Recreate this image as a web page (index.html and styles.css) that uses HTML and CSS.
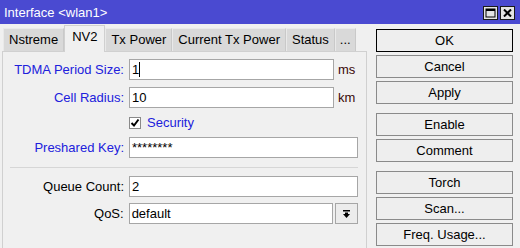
FILE: index.html
```html
<!DOCTYPE html>
<html lang="en">

<head>
    <meta charset="UTF-8">
    <meta name="viewport" content="width=device-width, initial-scale=1.0">
    <title>Interface &lt;wlan1&gt;</title>
    <link rel="stylesheet" href="styles.css">
</head>

<body>
    <div class="titlebar">
        <span class="title">Interface &lt;wlan1&gt;</span>
        <div class="win-buttons">
            <span class="win-btn">
                <svg width="11" height="10" viewBox="0 0 11 10">
                    <rect x="1" y="1" width="9" height="8" fill="none" stroke="#000" stroke-width="1"/>
                    <rect x="1" y="1" width="9" height="2" fill="#000"/>
                </svg>
            </span>
            <span class="win-btn">
                <svg width="9" height="8" viewBox="0 0 9 8">
                    <path d="M1 0.5 L8 7.5 M8 0.5 L1 7.5" stroke="#000" stroke-width="2"/>
                </svg>
            </span>
        </div>
    </div>

    <div class="main">
        <div class="left">
            <div class="tabs">
                <div class="tab">Nstreme</div>
                <div class="tab active">NV2</div>
                <div class="tab">Tx Power</div>
                <div class="tab">Current Tx Power</div>
                <div class="tab">Status</div>
                <div class="tab more">...</div>
            </div>

            <div class="panel">
                <div class="row first">
                    <span class="label blue">TDMA Period Size:</span>
                    <div class="field short">1<span class="caret"></span></div>
                    <span class="unit">ms</span>
                </div>
                <div class="row gap7">
                    <span class="label blue">Cell Radius:</span>
                    <div class="field short">10</div>
                    <span class="unit">km</span>
                </div>
                <div class="row check-row">
                    <span class="label"></span>
                    <span class="checkbox">
                        <svg width="10" height="10" viewBox="0 0 10 10">
                            <path d="M1.5 5 L4 7.5 L8.5 1.5" fill="none" stroke="#000" stroke-width="2"/>
                        </svg>
                    </span>
                    <span class="check-label blue">Security</span>
                </div>
                <div class="row gap4">
                    <span class="label blue">Preshared Key:</span>
                    <div class="field long">********</div>
                </div>

                <div class="separator"></div>

                <div class="row">
                    <span class="label">Queue Count:</span>
                    <div class="field long">2</div>
                </div>
                <div class="row gap6">
                    <span class="label">QoS:</span>
                    <div class="field short">default</div>
                    <span class="drop-btn">
                        <svg width="7" height="8" viewBox="0 0 7 8">
                            <rect x="0" y="0" width="7" height="1.5" fill="#000"/>
                            <rect x="2" y="2.5" width="3" height="1.5" fill="#000"/>
                            <path d="M0 4 L7 4 L3.5 8 Z" fill="#000"/>
                        </svg>
                    </span>
                </div>
            </div>
        </div>

        <div class="buttons">
            <div class="group">
                <div class="btn default">OK</div>
                <div class="btn">Cancel</div>
                <div class="btn">Apply</div>
            </div>
            <div class="group">
                <div class="btn">Enable</div>
                <div class="btn">Comment</div>
            </div>
            <div class="group">
                <div class="btn">Torch</div>
                <div class="btn">Scan...</div>
                <div class="btn">Freq. Usage...</div>
            </div>
        </div>
    </div>
</body>

</html>
```

FILE: styles.css
```css
/* Window frame */
body {
    margin: 0;
    background-color: #f0f0f0;
    font-family: 'Liberation Sans', Arial, sans-serif;
    font-size: 13px;
    color: #000;
    overflow: hidden;
}

.titlebar {
    height: 24px;
    background-color: #4a4ad1;
    display: flex;
    align-items: center;
    justify-content: space-between;
}

.title {
    color: #fff;
    padding-left: 4px;
    padding-top: 1px;
}

.win-buttons {
    display: flex;
    gap: 2px;
    margin-right: 5px;
    margin-top: 1px;
}

.win-btn {
    width: 13px;
    height: 12px;
    border: 1px solid #1a1a1a;
    background-color: #e4e4e4;
    display: flex;
    align-items: center;
    justify-content: center;
}

.main {
    display: flex;
}

/* Tabs and the property panel */
.left {
    margin-left: 2px;
    width: 365px;
}

.tabs {
    display: flex;
    align-items: flex-end;
    height: 26px;
    margin-top: 1px;
    padding-left: 1px;
}

.tab {
    height: 22px;
    line-height: 22px;
    padding: 0 5px;
    background-color: #d9d9d9;
    border: 1px solid #c9c9c9;
    border-top-color: #e9e9e9;
    border-left-color: #e9e9e9;
    border-bottom: none;
    box-sizing: content-box;
}

.tab.active {
    height: 26px;
    line-height: 22px;
    padding: 0 7px;
    background-color: #f0f0f0;
    border-color: #d0d0d0;
    margin-bottom: -1px;
    position: relative;
    z-index: 1;
}

.tab.more {
    padding: 0 4px;
}

.panel {
    border: 1px solid #d0d0d0;
    border-bottom: none;
    height: 200px;
    padding-top: 7px;
    padding-right: 8px;
}

.row {
    display: flex;
    align-items: center;
    height: 21px;
}

.gap7 {
    margin-top: 7px;
}

.gap6 {
    margin-top: 6px;
}

.gap4 {
    margin-top: 4px;
}

.check-row {
    margin-top: 4px;
}

.label {
    width: 121px;
    margin-right: 5px;
    text-align: right;
    white-space: nowrap;
}

.blue {
    color: #2020dc;
}

.field {
    height: 21px;
    box-sizing: border-box;
    border: 1px solid #a6a6a6;
    background-color: #fff;
    padding-left: 2px;
    line-height: 19px;
    white-space: nowrap;
}

.field.short {
    width: 205px;
}

.field.long {
    width: 229px;
}

.caret {
    display: inline-block;
    width: 1px;
    height: 15px;
    background-color: #000;
    vertical-align: -3px;
}

.unit {
    margin-left: 4px;
    color: #3a0808;
}

.checkbox {
    width: 10px;
    height: 10px;
    border: 1px solid #8a8a8a;
    background-color: #fff;
    display: flex;
    align-items: center;
    justify-content: center;
}

.check-label {
    margin-left: 6px;
}

.separator {
    height: 1px;
    background-color: #d6d6d6;
    margin: 9px 0 8px 7px;
}

.drop-btn {
    width: 21px;
    height: 19px;
    margin-left: 2px;
    border: 1px solid #a6a6a6;
    background-color: #ececec;
    display: flex;
    align-items: center;
    justify-content: center;
}

/* Command buttons on the right */
.buttons {
    margin-left: 9px;
    margin-top: 5px;
    width: 137px;
    display: flex;
    flex-direction: column;
    gap: 9px;
}

.group {
    display: flex;
    flex-direction: column;
    gap: 3px;
}

.btn {
    height: 21px;
    line-height: 21px;
    text-align: center;
    border: 1px solid #8a8a8a;
    background-color: #eeeeee;
}

.btn.default {
    border-color: #000;
}
```
